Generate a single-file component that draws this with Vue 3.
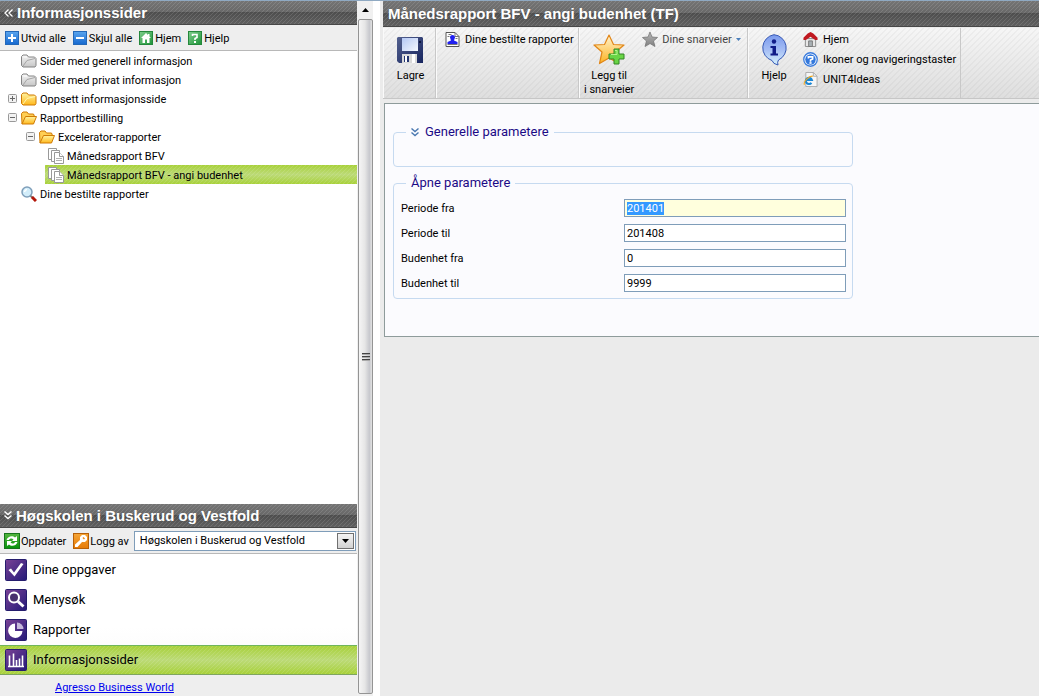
<script setup>
import { ref, onMounted } from 'vue'

const tree = [
  { label: 'Sider med generell informasjon', level: 0, icon: 'folder-grey' },
  { label: 'Sider med privat informasjon', level: 0, icon: 'folder-grey' },
  { label: 'Oppsett informasjonsside', level: 0, icon: 'folder', toggle: 'plus' },
  { label: 'Rapportbestilling', level: 0, icon: 'folder-open', toggle: 'minus' },
  { label: 'Excelerator-rapporter', level: 1, icon: 'folder-open', toggle: 'minus' },
  { label: 'Månedsrapport BFV', level: 2, icon: 'pages' },
  { label: 'Månedsrapport BFV - angi budenhet', level: 2, icon: 'pages', selected: true },
  { label: 'Dine bestilte rapporter', level: 0, icon: 'magnifier' },
]

const treeTools = [
  { label: 'Utvid alle', icon: 'expand' },
  { label: 'Skjul alle', icon: 'collapse' },
  { label: 'Hjem', icon: 'home-green' },
  { label: 'Hjelp', icon: 'help-green' },
]

const menu = [
  { label: 'Dine oppgaver', icon: 'nav-check' },
  { label: 'Menysøk', icon: 'nav-search' },
  { label: 'Rapporter', icon: 'nav-pie' },
  { label: 'Informasjonssider', icon: 'nav-bars', selected: true },
]

const helpLinks = [
  { label: 'Hjem', icon: 'house' },
  { label: 'Ikoner og navigeringstaster', icon: 'question' },
  { label: 'UNIT4Ideas', icon: 'ie-page' },
]

const fields = ref([
  { id: 'periode-fra', label: 'Periode fra', value: '201401' },
  { id: 'periode-til', label: 'Periode til', value: '201408' },
  { id: 'budenhet-fra', label: 'Budenhet fra', value: '0' },
  { id: 'budenhet-til', label: 'Budenhet til', value: '9999' },
])

const form = ref(null)

onMounted(() => {
  const first = form.value.querySelector('input')
  first.focus()
  first.select()
})
</script>

<template>
  <div class="page">
    <svg class="sprite" aria-hidden="true">
      <defs>
        <linearGradient id="g-blue" x1="0" y1="0" x2="0" y2="1"><stop offset="0" stop-color="#5aa5ee" /><stop offset="1" stop-color="#1668cf" /></linearGradient>
        <linearGradient id="g-green" x1="0" y1="0" x2="1" y2="1"><stop offset="0" stop-color="#7fce8c" /><stop offset="1" stop-color="#1d9338" /></linearGradient>
        <linearGradient id="g-refresh" x1="0" y1="0" x2="0" y2="1"><stop offset="0" stop-color="#55b53f" /><stop offset="1" stop-color="#05930b" /></linearGradient>
        <linearGradient id="g-orange" x1="0" y1="0" x2="0" y2="1"><stop offset="0" stop-color="#f6a637" /><stop offset="1" stop-color="#e57a06" /></linearGradient>
        <linearGradient id="g-grey" x1="0" y1="0" x2="0" y2="1"><stop offset="0" stop-color="#f4f4f4" /><stop offset="1" stop-color="#c6c6c6" /></linearGradient>
        <linearGradient id="g-folder" x1="0" y1="0" x2="0" y2="1"><stop offset="0" stop-color="#fff3a0" /><stop offset="1" stop-color="#ffb81c" /></linearGradient>
        <linearGradient id="g-nav" x1="0" y1="0" x2="1" y2="1"><stop offset="0" stop-color="#7a4296" /><stop offset="1" stop-color="#241a78" /></linearGradient>
        <linearGradient id="g-disk" x1="0" y1="0" x2="1" y2="1"><stop offset="0" stop-color="#54618f" /><stop offset="1" stop-color="#17255f" /></linearGradient>
        <linearGradient id="g-label" x1="0" y1="0" x2="1" y2="1"><stop offset="0" stop-color="#b4c8f4" /><stop offset="1" stop-color="#f4f8ff" /></linearGradient>
        <linearGradient id="g-star" x1="0" y1="0" x2="0" y2="1"><stop offset="0" stop-color="#fff3d0" /><stop offset="1" stop-color="#fdb321" /></linearGradient>
        <linearGradient id="g-star-grey" x1="0" y1="0" x2="0" y2="1"><stop offset="0" stop-color="#b8b8b8" /><stop offset="1" stop-color="#808080" /></linearGradient>
        <linearGradient id="g-info" x1="0" y1="0" x2="0" y2="1"><stop offset="0" stop-color="#7999ed" /><stop offset="0.5" stop-color="#a5bdf4" /><stop offset="1" stop-color="#d6f2fd" /></linearGradient>
      </defs>

      <symbol id="expand" viewBox="0 0 14 14"><rect x=".5" y=".5" width="13" height="13" fill="url(#g-blue)" stroke="#2468b8" /><path d="M7 3v8M3 7h8" stroke="#fff" stroke-width="2" /></symbol>
      <symbol id="collapse" viewBox="0 0 14 14"><rect x=".5" y=".5" width="13" height="13" fill="url(#g-blue)" stroke="#2468b8" /><path d="M3 7h8" stroke="#fff" stroke-width="2" /></symbol>
      <symbol id="home-green" viewBox="0 0 14 14"><rect x=".5" y=".5" width="13" height="13" fill="url(#g-green)" stroke="#25883c" /><path d="M7 2 2 7h1.500v5h2.500V8.500h2V12h2.500V7H12l-1.500-1.500V3H9v1z" fill="#fff" /></symbol>
      <symbol id="help-green" viewBox="0 0 14 14"><rect x=".5" y=".5" width="13" height="13" fill="url(#g-green)" stroke="#25883c" /><path d="M4.500 5V3.500h4.500v3L7 7.500V9" fill="none" stroke="#fff" stroke-width="1.600" /><path d="M6 10h2v2H6z" fill="#fff" /></symbol>

      <symbol id="folder-grey" viewBox="0 0 16 14"><path d="M.5 11.500v-9l1.500-1.500h4L7.500 3h6l1.500 1.500v7L14 13H2z" fill="url(#g-grey)" stroke="#848484" /><path d="M2 12 6 6.500l8-2" fill="none" stroke="#a5a5a5" /><path d="M2.500 3h3.500" stroke="#fff" /></symbol>
      <symbol id="folder" viewBox="0 0 16 14"><path d="M.5 11.500v-9l1.500-1.500h4L7.500 3h6l1.500 1.500v7L14 13H2z" fill="url(#g-folder)" stroke="#cf7b05" /><path d="M2 12 6 6.500l8-2" fill="none" stroke="#fff5b0" /></symbol>
      <symbol id="folder-open" viewBox="0 0 16 14"><path d="M1 13 .5 2.500 2 1h4l1.500 2h5l1 2.500" fill="#ffcf54" stroke="#cf7b05" /><path d="M1 13 4.500 5.500h11L12.500 13z" fill="url(#g-folder)" stroke="#cf7b05" /></symbol>
      <symbol id="pages" viewBox="0 0 16 16"><g stroke="#999" fill="#fff"><path d="M.5.500h8v11h-8z" /><path d="M3.500 2.500h8v11h-8z" /><path d="M6.500 4.500h5l4 4v7h-9z" /><path d="M11.500 4.500v4h4" /></g><path d="M8 10.500h6M8 12.500h6" stroke="#b0b0b0" /></symbol>
      <symbol id="magnifier" viewBox="0 0 16 16"><circle cx="6" cy="6" r="5" fill="#d2edfa" stroke="#7f9fba" stroke-width="1.500" /><path d="M3.500 6A3 3 0 0 1 6 3.500" fill="none" stroke="#fff" stroke-width="1.500" /><path d="m9.500 10 2 1.500" stroke="#777" stroke-width="2" /><path d="m11 11 4 4" stroke="#b3170a" stroke-width="3" /></symbol>

      <symbol id="refresh" viewBox="0 0 16 16"><rect x=".5" y=".5" width="15" height="15" fill="url(#g-refresh)" stroke="#16741b" /><path d="M2.500 7C4 2.500 9 2.500 11 4.500L13 3v5H8l1.500-1.500C8 5 6 5 5 7zM13.500 9C12 13.500 7 13.500 5 11.500L3 13V8h5L6.500 9.500C8 11 10 11 11 9z" fill="#fff" /></symbol>
      <symbol id="logout" viewBox="0 0 16 16"><rect x=".5" y=".5" width="15" height="15" fill="url(#g-orange)" stroke="#b76008" /><path d="M9 2h3l2 2v3l-2 2H9L4.500 14H2v-2.500L7 7V4z" fill="#fff" /><path d="M10 4.500 11.500 6" stroke="#ed8d19" stroke-width="1.500" /></symbol>

      <symbol id="nav-check" viewBox="0 0 22 22"><rect x=".5" y=".5" width="21" height="21" rx="1" fill="url(#g-nav)" stroke="#251c6d" /><path d="m3.500 11 2.500-1.500 3 4L16 4l2.500 1L9.500 17.500z" fill="#fff" /></symbol>
      <symbol id="nav-search" viewBox="0 0 22 22"><rect x=".5" y=".5" width="21" height="21" rx="1" fill="url(#g-nav)" stroke="#251c6d" /><circle cx="9" cy="8.500" r="5" fill="#49306e" stroke="#fff" stroke-width="2" /><path d="m13 12.500 5.500 5" stroke="#fff" stroke-width="3" /></symbol>
      <symbol id="nav-pie" viewBox="0 0 22 22"><rect x=".5" y=".5" width="21" height="21" rx="1" fill="url(#g-nav)" stroke="#251c6d" /><path d="M10 4.500V12h7.500A7.200 7.200 0 1 1 10 4.500z" fill="#fff" /><path d="M12 3.500a6.500 6.500 0 0 1 6.500 6.500H12z" fill="#c5b7db" /></symbol>
      <symbol id="nav-bars" viewBox="0 0 22 22"><rect x=".5" y=".5" width="21" height="21" rx="1" fill="url(#g-nav)" stroke="#251c6d" /><path d="M3 17.500h16M4.500 17V6.500M8.500 17V4.500M11.500 17v-6M14.500 17V9.500M17.500 17V6.500" stroke="#fff" stroke-width="1.600" /></symbol>

      <symbol id="disk" viewBox="0 0 26 26"><path d="M1 0h24l1 1v25H2l-2-2V1z" fill="url(#g-disk)" /><rect x="5" y="1" width="16" height="13" fill="url(#g-label)" /><path d="M5 17h15v9H5z" fill="#d9d9d9" /><path d="M7 19h5v6H7z" fill="#24356f" /><path d="M8 19h2v6H8zM15 17h3v9h-3z" fill="#fff" /><path d="M23 4v2" stroke="#0c1740" stroke-width="2" /></symbol>
      <symbol id="ordered" viewBox="0 0 14 15"><path d="M.5.500h9l4 4v10H.5z" fill="#fff" stroke="#555" /><path d="M9.500.500v4h4M3 2.500h3M2 4.500h2M10 6.500h2M2 12.500h10" fill="none" stroke="#777" /><path d="M4.500 5.500a2.500 2.500 0 1 1 5 0L8.500 8.500 12 10v2H2v-2L5.500 8.500z" fill="#2020f0" /></symbol>
      <symbol id="star-add" viewBox="0 0 32 31"><path d="m16 1 4.500 9.500L31 11l-8.500 7L25 29l-9-5-9.500 5.500L9 18 1 11l10.500-.5z" fill="url(#g-star)" stroke="#e18618" stroke-width="1.200" stroke-linejoin="round" /><path d="M21 15h5v5h5v5h-5v5h-5v-5h-5v-5h5z" fill="#69d545" stroke="#348526" /><path d="M22 16.500h2v4h-6" fill="none" stroke="#b5f48f" /></symbol>
      <symbol id="star-grey" viewBox="0 0 16 16"><path d="m8 1 2 5 5.500.5-4 3.500 1.500 5.500L8 12.500 3 15.500 4.500 10 .5 6.500 6 6z" fill="url(#g-star-grey)" stroke="#777" stroke-width=".8" /></symbol>
      <symbol id="info" viewBox="0 0 28 32"><path d="M14 .700A13.300 13.300 0 0 1 18.500 26Q17 28 18 31q-5-1-6-4.500A13.300 13.300 0 0 1 14 .700z" fill="url(#g-info)" stroke="#3658b4" /><circle cx="14" cy="7.500" r="2.200" fill="#111c88" /><path d="M10.500 12H16v7.500h2v2h-7.500v-2h2V14h-2z" fill="#111c88" /></symbol>

      <symbol id="house" viewBox="0 0 15 16"><path d="M2 7h11v8.500H2z" fill="#e7e7e7" stroke="#888" /><path d="M5.500 9.500h4v6h-4z" fill="#a8b0b4" stroke="#777" /><path d="M0 6 4.500 1.500 7.500 0l3 1.500L15 6v2.500h-2.500L7.500 5 2.500 8.500H0z" fill="#c01820" /></symbol>
      <symbol id="question" viewBox="0 0 14 14"><circle cx="7" cy="7" r="6.300" fill="#fff" stroke="#397bdd" stroke-width="1.200" /><circle cx="7" cy="7" r="4.900" fill="#3378dc" /><path d="M5 6V4.500h4V6.500L7 7.500V9" fill="none" stroke="#fff" stroke-width="1.500" /><path d="M6 9.500h2V11H6z" fill="#fff" /></symbol>
      <symbol id="ie-page" viewBox="0 0 15 16"><path d="M2.500.500h8l4 4v11h-12z" fill="#f6f6f6" stroke="#aaa" /><path d="M10.500.500v4h4" fill="none" stroke="#aaa" /><path d="M8.500 11.500A3.300 3.300 0 1 1 9 8.500H3" fill="none" stroke="#1c87d5" stroke-width="2.200" /><path d="M1 13.500C-.5 10 6 4 10 4.500" fill="none" stroke="#f3a920" stroke-width="1.200" /></symbol>

      <symbol id="plus" viewBox="0 0 9 9"><rect x=".5" y=".5" width="8" height="8" rx="1" fill="#f2f2f2" stroke="#999" /><path d="M4.500 2v5M2 4.500h5" stroke="#666" /></symbol>
      <symbol id="minus" viewBox="0 0 9 9"><rect x=".5" y=".5" width="8" height="8" rx="1" fill="#f2f2f2" stroke="#999" /><path d="M2 4.500h5" stroke="#666" /></symbol>
      <symbol id="chevrons-left" viewBox="0 0 9 8"><path d="M4.500.500 1 4l3.500 3.500M8.500.500 5 4l3.500 3.500" fill="none" stroke="currentColor" stroke-width="1.300" /></symbol>
      <symbol id="chevrons-down" viewBox="0 0 8 9"><path d="M.5.500 4 3.500 7.500.500M.5 4.500 4 7.500l3.500-3" fill="none" stroke="currentColor" stroke-width="1.400" /></symbol>
      <symbol id="caret" viewBox="0 0 7 4"><path d="M0 0h7L3.500 4z" fill="currentColor" /></symbol>
    </svg>

    <aside class="side">
      <header class="bar">
        <svg class="chev-left"><use href="#chevrons-left" /></svg>
        <h2>Informasjonssider</h2>
      </header>
      <div class="tools">
        <button v-for="t in treeTools" :key="t.label" type="button">
          <svg class="i14"><use :href="'#' + t.icon" /></svg><span>{{ t.label }}</span>
        </button>
      </div>
      <ul class="tree">
        <li v-for="n in tree" :key="n.label" :class="['level-' + n.level, { selected: n.selected }]">
          <span class="slot"><svg v-if="n.toggle" class="i9"><use :href="'#' + n.toggle" /></svg></span>
          <svg class="i16"><use :href="'#' + n.icon" /></svg>
          <a href="#">{{ n.label }}</a>
        </li>
      </ul>

      <header class="bar">
        <svg class="chev-down"><use href="#chevrons-down" /></svg>
        <h2>Høgskolen i Buskerud og Vestfold</h2>
      </header>
      <div class="session">
        <button type="button"><svg class="i16"><use href="#refresh" /></svg><span>Oppdater</span></button>
        <button type="button"><svg class="i16"><use href="#logout" /></svg><span>Logg av</span></button>
        <div class="client">
          <select aria-label="Klient"><option>Høgskolen i Buskerud og Vestfold</option></select>
          <span class="drop"><svg class="caret"><use href="#caret" /></svg></span>
        </div>
      </div>
      <nav class="menu">
        <a v-for="m in menu" :key="m.label" href="#" :class="{ selected: m.selected }">
          <svg class="i22"><use :href="'#' + m.icon" /></svg>{{ m.label }}
        </a>
      </nav>
      <footer><a href="#">Agresso Business World</a></footer>
    </aside>

    <div class="scroll" aria-hidden="true">
      <div class="up"><svg class="caret"><use href="#caret" /></svg></div>
      <div class="thumb"><i></i><i></i><i></i></div>
    </div>

    <main>
      <header class="bar"><h1>Månedsrapport BFV - angi budenhet (TF)</h1></header>
      <div class="ribbon">
        <section class="save">
          <button type="button" class="big"><span class="art"><svg class="disk"><use href="#disk" /></svg></span>Lagre</button>
        </section>
        <section class="ordered">
          <a href="#" class="small"><svg class="i15"><use href="#ordered" /></svg><span>Dine bestilte rapporter</span></a>
        </section>
        <section class="shortcuts">
          <button type="button" class="big"><span class="art"><svg class="star"><use href="#star-add" /></svg></span>Legg til<br />i snarveier</button>
          <button type="button" class="small muted"><svg class="i16"><use href="#star-grey" /></svg><span>Dine snarveier</span><svg class="tiny"><use href="#caret" /></svg></button>
        </section>
        <section class="help">
          <button type="button" class="big"><span class="art"><svg class="info"><use href="#info" /></svg></span>Hjelp</button>
          <div class="links">
            <a v-for="l in helpLinks" :key="l.label" href="#" class="small"><svg class="i15"><use :href="'#' + l.icon" /></svg><span>{{ l.label }}</span></a>
          </div>
        </section>
      </div>

      <form ref="form" class="panel" @submit.prevent>
        <fieldset class="general">
          <legend><svg class="chev-down"><use href="#chevrons-down" /></svg>Generelle parametere</legend>
        </fieldset>
        <fieldset class="open">
          <legend>Åpne parametere</legend>
          <div v-for="f in fields" :key="f.id" class="field">
            <label :for="f.id">{{ f.label }}</label>
            <input :id="f.id" v-model="f.value" type="text" />
          </div>
        </fieldset>
      </form>
    </main>
  </div>
</template>

<style>
html,
body {
  margin: 0;
  background: #ebebeb;
}
</style>

<style scoped>
.page {
  --light: rgba(255, 255, 255, 0.12);
  --dark: rgba(0, 0, 0, 0.03);
  display: flex;
  box-sizing: border-box;
  min-height: 100vh;
  border-top: 1px solid #8fa9c2;
  background: #ebebeb;
  color: #000;
  font: 11px/14px Roboto, 'Noto Sans', sans-serif;
}
.page * { box-sizing: border-box; }
.sprite { position: absolute; width: 0; height: 0; }
svg { display: block; flex: none; }
button {
  display: flex;
  align-items: center;
  padding: 0;
  border: 0;
  background: none;
  color: inherit;
  font: inherit;
  white-space: nowrap;
}
a { color: inherit; text-decoration: none; white-space: nowrap; }
.tools span,
.session button span,
.small span,
.tree a,
.field label { padding-top: 2px; }
.i9 { width: 9px; height: 9px; }
.i14 { width: 14px; height: 14px; }
.i15 { width: 15px; height: 15px; }
.i16 { width: 16px; height: 16px; }
.i22 { width: 22px; height: 22px; }
.chev-left { width: 9px; height: 8px; }
.chev-down { width: 8px; height: 9px; }
.caret { width: 7px; height: 4px; }

.bar {
  display: flex;
  align-items: center;
  gap: 4px;
  height: 24px;
  padding: 0 4px;
  border-bottom: 1px solid #474747;
  background:
    linear-gradient(135deg, var(--light) 12.5%, transparent 12.5% 50%, var(--light) 50% 62.5%, transparent 62.5%) 0 0 / 4px 4px,
    linear-gradient(#747474, #686868 50%, #4e4e4e 50%, #606060);
  color: #fff;
}
.bar h1,
.bar h2 {
  margin: 0;
  font: bold 15px/20px 'Liberation Sans', Arial, sans-serif;
  white-space: nowrap;
}

.side {
  display: flex;
  flex-direction: column;
  flex: none;
  width: 357px;
  background: #fff;
}
.tools,
.session {
  display: flex;
  align-items: center;
  height: 26px;
  border-bottom: 1px solid #b8b8b8;
  background: #eee;
}
.tools { gap: 7px; padding: 0 5px; }
.tools button { gap: 2px; }
.tree {
  flex: 1;
  margin: 0;
  padding: 0;
  list-style: none;
}
.tree li { display: flex; align-items: center; height: 19px; }
.tree li a { margin-left: 3px; }
.slot { width: 13px; }
.level-0 { padding-left: 8px; }
.level-1 { padding-left: 26px; }
.level-2 { margin-left: 45px; padding-left: 3px; }
.level-2 .slot { display: none; }
.selected {
  background:
    linear-gradient(135deg, var(--light) 12.5%, transparent 12.5% 50%, var(--light) 50% 62.5%, transparent 62.5%) 0 0 / 4px 4px,
    linear-gradient(#a8d13a, #bcda78 50%, #a8d13a);
}
.session { gap: 7px; padding: 0 1px 0 4px; }
.session button { gap: 1px; }
.client { display: grid; flex: 1; margin-left: -2px; }
.client > * { grid-area: 1 / 1; }
.client select {
  width: 100%;
  height: 20px;
  padding: 1px 20px 0 5px;
  border: 1px solid #7f9db9;
  border-radius: 0;
  appearance: none;
  background: #fff;
  color: #000;
  font: inherit;
}
.drop {
  display: flex;
  align-items: center;
  justify-content: center;
  justify-self: end;
  align-self: center;
  width: 17px;
  height: 16px;
  margin-right: 2px;
  border: 1px solid #707070;
  background: linear-gradient(#f4f4f4, #d2d2d2);
  pointer-events: none;
}
.menu { display: flex; flex-direction: column; padding-top: 1px; background: linear-gradient(#fff 60%, #f9f9f9); }
.menu a {
  display: flex;
  align-items: center;
  gap: 6px;
  height: 30px;
  padding-left: 5px;
  font-size: 13px;
}
.menu .selected { border-top: 1px solid #6fb55c; border-bottom: 1px solid #7fa560; }
footer { height: 21px; padding: 6px 0 0 55px; background: #eee; }
footer a { display: block; color: #00e; text-decoration: underline; }

.scroll {
  display: flex;
  flex-direction: column;
  flex: none;
  width: 23px;
  padding: 0 7px 2px 1px;
  background: linear-gradient(90deg, #f0f0f0 16px, #fff 16px);
}
.up { display: flex; align-items: center; justify-content: center; height: 18px; }
.up svg { transform: rotate(180deg); }
.thumb {
  display: flex;
  flex: 1;
  flex-direction: column;
  align-items: center;
  justify-content: center;
  gap: 1px;
  border: 1px solid #949494;
  border-radius: 2px;
  background: linear-gradient(90deg, #f5f5f5, #e6e6e6 45%, #c7c8cd 80%, #e2e2e2);
}
.thumb i { width: 8px; height: 2px; border-top: 1px solid #444; background: #aaa; }

main { flex: 1; min-width: 0; padding-left: 3px; }
main .bar { height: 26px; padding-left: 5px; }
.ribbon {
  display: flex;
  height: 71px;
  margin-top: 1px;
  border-bottom: 1px solid #c6c6c6;
  background:
    linear-gradient(135deg, var(--dark) 12.5%, transparent 12.5% 50%, var(--dark) 50% 62.5%, transparent 62.5%) 0 0 / 6px 6px,
    linear-gradient(#f6f6f6, #dedede);
}
.ribbon section {
  display: flex;
  align-items: flex-start;
  border-right: 1px solid #c8c8c8;
  border-left: 1px solid #fafafa;
}
.save { width: 53px; padding-left: 2px; justify-content: center; }
.ordered { width: 143px; padding-left: 8px; }
.shortcuts { width: 169px; padding-left: 4px; gap: 8px; }
.help { width: 213px; padding-left: 11px; gap: 15px; }
.big { display: block; padding-top: 4px; text-align: center; }
.art { display: flex; align-items: center; justify-content: center; height: 37px; padding-bottom: 2px; }
.disk { width: 26px; height: 26px; }
.star { width: 32px; height: 31px; }
.info { width: 28px; height: 32px; }
.small { display: flex; align-items: center; gap: 5px; height: 20px; padding-top: 2px; }
.muted { color: #444; gap: 4px; }
.tiny { width: 5px; height: 3px; color: #4a7ebb; }

.panel {
  display: flex;
  flex-direction: column;
  gap: 9px;
  height: 234px;
  margin: 4px 0 0 1px;
  padding: 21px 8px 0;
  border: 1px solid #8e9b9b;
  border-right: 0;
  background: #fbfbfe;
}
fieldset {
  width: 460px;
  min-width: 0;
  margin: 0;
  padding: 0 6px;
  border: 1px solid #c6daf0;
  border-radius: 4px;
}
legend {
  display: flex;
  align-items: center;
  gap: 6px;
  margin-left: 6px;
  padding: 0 5px;
  color: #1b0a86;
  font: 13px/14px Roboto, 'Liberation Sans', sans-serif;
}
.general { height: 42px; }
.general legend svg { color: #4a78b0; }
.open { height: 123px; }
.field { display: flex; align-items: center; justify-content: space-between; height: 25px; padding-left: 1px; }
.open legend + .field { margin-top: 5px; }
.field input {
  width: 222px;
  height: 18px;
  padding: 1px 2px 0;
  border: 1px solid #7f9db9;
  outline: 0;
  background: #fff;
  color: #000;
  font: inherit;
}
.field input:focus { background: #ffffdd; }
.field input::selection { background: #3399ff; color: #fff; }
</style>
